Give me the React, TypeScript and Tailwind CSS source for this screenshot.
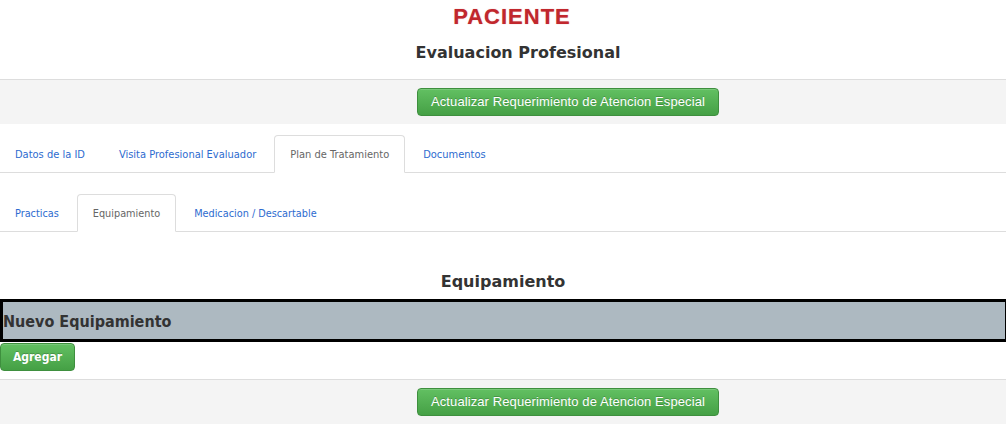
const tabs1 = ["Datos de la ID", "Visita Profesional Evaluador", "Plan de Tratamiento", "Documentos"];
const tabs2 = ["Practicas", "Equipamiento", "Medicacion / Descartable"];

function Tabs({ items, active, small }: { items: string[]; active: string; small?: boolean }) {
  return (
    <ul className={"flex -ml-px border-b border-[#dddddd] font-['DejaVu_Sans_Condensed','Noto_Sans',sans-serif] " + (small ? "text-[10.8px]" : "text-[11px]")}>
      {items.map((t) =>
        t === active ? (
          <li key={t} className="-mb-px mr-[2px] h-[38px] pt-[2px] flex items-center px-[15px] border border-[#dddddd] border-b-white bg-white rounded-t-[4px] text-[#666666]">
            {t}
          </li>
        ) : (
          <li key={t} className="-mb-px mr-[2px] h-[38px] pt-[2px] flex items-center px-[15px] border border-transparent text-[#2d6bcf]">
            {t}
          </li>
        )
      )}
    </ul>
  );
}

function GreenButton({ children, className = "" }: { children: React.ReactNode; className?: string }) {
  return (
    <button className={"h-[28px] rounded-[4px] border border-[#3e8f3e] bg-gradient-to-b from-[#62c062] to-[#45a045] text-white [text-shadow:0_-1px_0_rgba(0,0,0,0.2)] shadow-[inset_0_1px_0_rgba(255,255,255,0.15)] " + className}>
      {children}
    </button>
  );
}

function ActionBand() {
  return (
    <div className="border-t border-[#dddddd] bg-[#f4f4f4] py-[8px] flex justify-center">
      <GreenButton className="w-[302px] ml-[130px] font-['Liberation_Sans',sans-serif] text-[13px] tracking-[0.1px]">
        Actualizar Requerimiento de Atencion Especial
      </GreenButton>
    </div>
  );
}

export default function App() {
  return (
    <div className="w-[1006px] h-[428px] overflow-hidden bg-white text-[#333333]">
      <div className="h-[79px] flex flex-col items-center">
        <h1 className="pt-[4px] h-[32px] ml-[18px] font-['Liberation_Sans',sans-serif] font-bold text-[22px] leading-[26px] tracking-[1px] text-[#c1272d] [text-shadow:0_0_1px_rgba(193,39,45,0.5)]">
          PACIENTE
        </h1>
        <h2 className="mt-[7px] ml-[30px] font-['DejaVu_Sans',sans-serif] font-bold text-[16px] leading-[28px] text-[#333333]">
          Evaluacion Profesional
        </h2>
      </div>
      <ActionBand />
      <div className="mt-[11px]">
        <Tabs items={tabs1} active="Plan de Tratamiento" />
      </div>
      <div className="mt-[21px]">
        <Tabs items={tabs2} active="Equipamiento" small />
      </div>
      <h3 className="mt-[36px] text-center font-['DejaVu_Sans',sans-serif] font-bold text-[16px] leading-[28px] text-[#333333]">
        Equipamiento
      </h3>
      <div className="mt-[3px] w-[1008px] h-[43px] pt-[3px] border-[3px] border-black bg-[#adb9c1] flex items-center">
        <span className="font-['DejaVu_Sans_Condensed','DejaVu_Sans',sans-serif] font-bold text-[16px] text-[#333333]">Nuevo Equipamiento</span>
      </div>
      <GreenButton className="mt-[1px] w-[75px] font-['DejaVu_Sans_Condensed','DejaVu_Sans',sans-serif] font-bold text-[12px]">
        Agregar
      </GreenButton>
      <div className="mt-[8px]">
        <ActionBand />
      </div>
    </div>
  );
}
